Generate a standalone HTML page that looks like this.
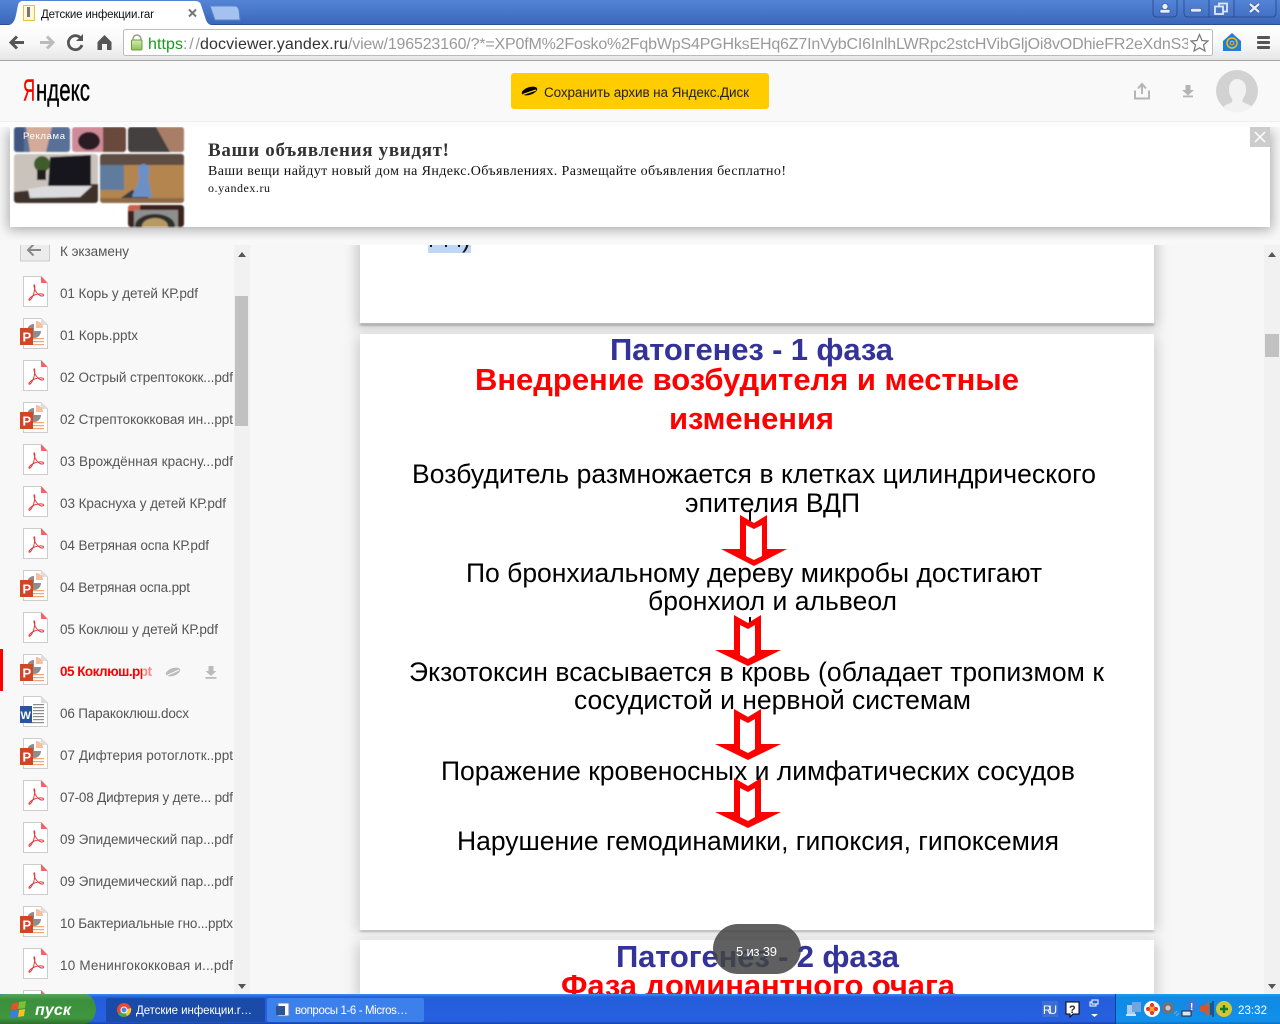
<!DOCTYPE html>
<html lang="ru"><head><meta charset="utf-8"><title>Детские инфекции.rar</title>
<style>
html,body{margin:0;padding:0;width:1280px;height:1024px;overflow:hidden;background:#f8f8f8}
svg{display:block;position:absolute;left:0;top:0}
text{font-family:"Liberation Sans",sans-serif;white-space:pre}
.serif{font-family:"Liberation Serif",serif}
.s{font-size:13.5px;fill:#555}
.b{font-size:26.5px;fill:#000}
.t{font-size:31px;font-weight:700;fill:#333399}
.r{font-size:31px;font-weight:700;fill:#f00}
</style></head><body>
<svg width="1280" height="1024" viewBox="0 0 1280 1024" xmlns="http://www.w3.org/2000/svg">
<defs>
<linearGradient id="tabbar" x1="0" y1="0" x2="0" y2="1"><stop offset="0" stop-color="#5484d6"/><stop offset="1" stop-color="#3a66b8"/></linearGradient>
<linearGradient id="tool" x1="0" y1="0" x2="0" y2="1"><stop offset="0" stop-color="#fff"/><stop offset=".5" stop-color="#f8f8f8"/><stop offset="1" stop-color="#e6e6e6"/></linearGradient>
<linearGradient id="task" x1="0" y1="0" x2="0" y2="1"><stop offset="0" stop-color="#3f8cf3"/><stop offset=".1" stop-color="#245edb"/><stop offset=".9" stop-color="#2660e0"/><stop offset="1" stop-color="#1941a5"/></linearGradient>
<linearGradient id="tray" x1="0" y1="0" x2="0" y2="1"><stop offset="0" stop-color="#1ba0f0"/><stop offset=".1" stop-color="#0f8ae6"/><stop offset=".9" stop-color="#1290e8"/><stop offset="1" stop-color="#0b6ec8"/></linearGradient>
<linearGradient id="start" x1="0" y1="0" x2="0" y2="1"><stop offset="0" stop-color="#5aa55a"/><stop offset=".2" stop-color="#3c8f3c"/><stop offset=".8" stop-color="#409640"/><stop offset="1" stop-color="#2d6e2d"/></linearGradient>
<linearGradient id="lock" x1="0" y1="0" x2="0" y2="1"><stop offset="0" stop-color="#d8ecb0"/><stop offset="1" stop-color="#86c25a"/></linearGradient>
<filter id="blur"><feGaussianBlur stdDeviation="1.2"/></filter>
<filter id="blurS"><feGaussianBlur stdDeviation="6"/></filter>
<filter id="soft"><feGaussianBlur stdDeviation=".8"/></filter>
<clipPath id="docclip"><rect x="250" y="245" width="1014" height="749"/></clipPath>
<clipPath id="sideclip"><rect x="0" y="245" width="250" height="749"/></clipPath>
<clipPath id="urlclip"><rect x="124" y="30" width="1064" height="26"/></clipPath>
<clipPath id="t1"><rect x="14" y="127" width="56" height="25" rx="3"/></clipPath>
<clipPath id="t2"><rect x="72" y="127" width="54" height="25" rx="3"/></clipPath>
<clipPath id="t3"><rect x="128" y="127" width="56" height="25" rx="3"/></clipPath>
<clipPath id="t4"><rect x="14" y="154" width="84" height="49" rx="3"/></clipPath>
<clipPath id="t5"><rect x="100" y="154" width="84" height="49" rx="3"/></clipPath>
<clipPath id="t6"><rect x="128" y="205" width="56" height="22" rx="3"/></clipPath>
<g id="pdf">
<path d="M23.5 0.5H41L47.5 7V30.5H23.5Z" fill="#fff" stroke="#ccc"/>
<path d="M41 0L47.5 7H41Z" fill="#e66"/>
<path d="M34.5 9c-1.2 3 1.5 8 5.5 10.5 2 1 4 .5 3.5-.7-.6-1.3-5-1.2-9 .2-3 1-6 4-5.5 5 .6 1 3-1.5 4.5-5.5 1-2.8 1.8-8.5 1-9.5-.5-.5-.5 0-.5.5Z" fill="none" stroke="#e0393e" stroke-width="1"/>
</g>
<g id="ppt">
<path d="M23.5 0.5H41L47.5 7V30.5H23.5Z" fill="#fff" stroke="#ccc"/>
<path d="M41 0L47.5 7H41Z" fill="#ddd"/>
<path d="M36 3a7 7 0 0 1 7 7h-7Z" fill="#f6bf9e"/>
<path d="M34 6v7h7a7 7 0 1 1-7-7Z" fill="#8d8d8d"/>
<rect x="33" y="20" width="11" height="1.2" fill="#f0a67c"/><rect x="33" y="23" width="11" height="1.2" fill="#f0a67c"/><rect x="33" y="26" width="11" height="1.2" fill="#f0a67c"/>
<rect x="20" y="10" width="13" height="17" fill="#d24625"/>
<text x="22.5" y="23.5" style="font-size:13px;font-weight:700;fill:#fff">P</text>
</g>
<g id="doc">
<path d="M23.5 0.5H41L47.5 7V30.5H23.5Z" fill="#fff" stroke="#ccc"/>
<path d="M41 0L47.5 7H41Z" fill="#ddd"/>
<g fill="#8a8a8a"><rect x="33" y="8" width="11" height="1.2"/><rect x="33" y="11" width="11" height="1.2"/><rect x="33" y="14" width="11" height="1.2"/><rect x="33" y="17" width="11" height="1.2"/><rect x="33" y="20" width="11" height="1.2"/><rect x="33" y="23" width="11" height="1.2"/><rect x="26" y="26" width="18" height="1.2"/></g>
<rect x="20" y="10" width="12" height="17" fill="#2a5699"/>
<text x="20.5" y="23" style="font-size:11px;font-weight:700;fill:#fff">W</text>
</g>
</defs>

<rect width="1280" height="1024" fill="#f8f8f8"/>

<g clip-path="url(#docclip)">
<rect x="250" y="245" width="1014" height="749" fill="#f7f7f7"/>
<rect x="356" y="238" width="802" height="90" fill="#999" opacity=".5" filter="url(#blurS)"/>
<rect x="360" y="323" width="794" height="3" fill="#aaa" filter="url(#blur)"/>
<rect x="360" y="245" width="794" height="78" fill="#fff"/>
<rect x="428" y="245" width="43" height="8" fill="#bdd7f5"/>
<rect x="430" y="245" width="2" height="2" fill="#111"/><rect x="445" y="245" width="2" height="2" fill="#111"/><rect x="458" y="245" width="2" height="2" fill="#111"/>
<text x="462" y="247" style="font-size:26px;fill:#111">)</text>
<rect x="356" y="336" width="802" height="596" fill="#999" opacity=".4" filter="url(#blurS)"/>
<rect x="360" y="930" width="794" height="2" fill="#aaa" filter="url(#blur)"/>
<rect x="360" y="334" width="794" height="596" fill="#fff"/>
<rect x="356" y="942" width="802" height="60" fill="#999" opacity=".4" filter="url(#blurS)"/>
<rect x="360" y="940" width="794" height="60" fill="#fff"/>

<text class="t" x="610" y="360" textLength="283">Патогенез - 1 фаза</text>
<text class="r" x="475" y="390" textLength="544">Внедрение возбудителя и местные</text>
<text class="r" x="669" y="429" textLength="165">изменения</text>
<text class="b" x="412" y="483" textLength="684">Возбудитель размножается в клетках цилиндрического</text>
<text class="b" x="685" y="512" textLength="175">эпителия ВДП</text>
<text class="b" x="466" y="582" textLength="576">По бронхиальному дереву микробы достигают</text>
<text class="b" x="648" y="610" textLength="249">бронхиол и альвеол</text>
<text class="b" x="409" y="681" textLength="695">Экзотоксин всасывается в кровь (обладает тропизмом к</text>
<text class="b" x="574" y="709" textLength="397">сосудистой и нервной системам</text>
<text class="b" x="441" y="780" textLength="634">Поражение кровеносных и лимфатических сосудов</text>
<text class="b" x="457" y="850" textLength="602">Нарушение гемодинамики, гипоксия, гипоксемия</text>
<rect x="749" y="511" width="2" height="10" fill="#000"/>
<rect x="749" y="617" width="2" height="6" fill="#000"/>

<path fill="#f00" d="M740 515L754 523L767 515V549H787L754 566L721 549H740Z"/>
<path fill="#fff" d="M746 525L754 529L762 525V556L754 560L746 556Z"/>
<path fill="#f00" d="M734 615L748 623L761 615V650H781L748 666L715 650H734Z"/>
<path fill="#fff" d="M740 625L748 629L755 625V655L748 659L740 655Z"/>
<path fill="#f00" d="M734 709L748 717L761 709V744H781L748 760L715 744H734Z"/>
<path fill="#fff" d="M740 719L748 723L755 719V749L748 753L740 749Z"/>
<path fill="#f00" d="M734 778L748 786L761 778V812H781L748 828L715 812H734Z"/>
<path fill="#fff" d="M740 788L748 792L755 788V817L748 821L740 817Z"/>

<text class="t" x="616" y="967" textLength="283">Патогенез - 2 фаза</text>
<text class="r" x="561" y="996" textLength="394">Фаза доминантного очага</text>
<rect x="713" y="924" width="88" height="50" rx="25" fill="#444" fill-opacity=".85"/>
<text x="736" y="956" style="font-size:13px;fill:#fff" textLength="41">5 из 39</text>
</g>

<rect x="1264" y="245" width="16" height="749" fill="#f1f1f1"/>
<rect x="1265" y="334" width="14" height="23" fill="#c1c1c1"/>
<path d="M1268 257L1272 252L1276 257Z" fill="#555"/>
<path d="M1268 984L1272 989L1276 984Z" fill="#555"/>

<g clip-path="url(#sideclip)">
<rect x="20.5" y="238" width="29" height="23" fill="#ececec" stroke="#ccc"/>
<path d="M28 250H41M33.500 244.500L28 250L33.500 255.500" fill="none" stroke="#888" stroke-width="2"/>
<text class="s" x="60" y="256" textLength="69">К экзамену</text>
<use href="#pdf" y="276"/><text class="s" x="60" y="298" textLength="138">01 Корь у детей КР.pdf</text>
<use href="#ppt" y="318"/><text class="s" x="60" y="340" textLength="78">01 Корь.pptx</text>
<use href="#pdf" y="360"/><text class="s" x="60" y="382" textLength="173">02 Острый стрептококк...pdf</text>
<use href="#ppt" y="402"/><text class="s" x="60" y="424" textLength="173">02 Стрептококковая ин...ppt</text>
<use href="#pdf" y="444"/><text class="s" x="60" y="466" textLength="173">03 Врождённая красну...pdf</text>
<use href="#pdf" y="486"/><text class="s" x="60" y="508" textLength="166">03 Краснуха у детей КР.pdf</text>
<use href="#pdf" y="528"/><text class="s" x="60" y="550" textLength="149">04 Ветряная оспа КР.pdf</text>
<use href="#ppt" y="570"/><text class="s" x="60" y="592" textLength="130">04 Ветряная оспа.ppt</text>
<use href="#pdf" y="612"/><text class="s" x="60" y="634" textLength="158">05 Коклюш у детей КР.pdf</text>
<rect x="0" y="649" width="3" height="42" fill="#f00"/>
<use href="#ppt" y="654"/><text x="60" y="676" style="font-size:13.5px;font-weight:700;fill:#f00" textLength="92">05 Коклюш.ppt</text>
<rect x="142" y="660" width="12" height="20" fill="#f8f8f8" opacity=".55"/>
<ellipse cx="173" cy="672" rx="7.5" ry="3.8" fill="#bbb" transform="rotate(-20 173 672)"/>
<path d="M167 675.5L179 670" stroke="#f8f8f8" stroke-width="1.2"/>
<path d="M208.5 666h5v5h3l-5.5 5-5.5-5h3Z" fill="#bbb"/><rect x="205.5" y="677" width="11" height="1.8" fill="#bbb"/>
<use href="#doc" y="696"/><text class="s" x="60" y="718" textLength="129">06 Паракоклюш.docx</text>
<use href="#ppt" y="738"/><text class="s" x="60" y="760" textLength="173">07 Дифтерия ротоглотк..ppt</text>
<use href="#pdf" y="780"/><text class="s" x="60" y="802" textLength="173">07-08 Дифтерия у дете... pdf</text>
<use href="#pdf" y="822"/><text class="s" x="60" y="844" textLength="173">09 Эпидемический пар...pdf</text>
<use href="#pdf" y="864"/><text class="s" x="60" y="886" textLength="173">09 Эпидемический пар...pdf</text>
<use href="#ppt" y="906"/><text class="s" x="60" y="928" textLength="173">10 Бактериальные гно...pptx</text>
<use href="#pdf" y="948"/><text class="s" x="60" y="970" textLength="173">10 Менингококковая и...pdf</text>
<use href="#pdf" y="990"/>
<rect x="234" y="245" width="16" height="749" fill="#f1f1f1"/>
<rect x="235" y="296" width="13" height="130" fill="#c1c1c1"/>
<path d="M238 257L242 252L246 257Z" fill="#555"/>
<path d="M238 984L242 989L246 984Z" fill="#555"/>
</g>

<rect x="0" y="227" width="1280" height="18" fill="#f8f8f8"/>
<rect x="8" y="131" width="1264" height="99" fill="#777" opacity=".6" filter="url(#blurS)"/>

<rect x="10" y="127" width="1260" height="100" fill="#fff"/>
<g filter="url(#soft)">
<g clip-path="url(#t1)"><rect x="14" y="127" width="56" height="25" fill="#5a6f97"/><path d="M26 127H52L46 152H30Z" fill="#d4ab98"/><rect x="14" y="127" width="10" height="25" fill="#3f5680"/></g>
<g clip-path="url(#t2)"><rect x="72" y="127" width="54" height="25" fill="#d08b98"/><ellipse cx="89" cy="141" rx="11" ry="9" fill="#2b1e22"/><rect x="103" y="127" width="23" height="25" fill="#6a4a3e"/></g>
<g clip-path="url(#t3)"><rect x="128" y="127" width="56" height="25" fill="#44413f"/><path d="M156 127H184V152H170Z" fill="#a87f66"/></g>
<g clip-path="url(#t4)"><rect x="14" y="154" width="84" height="49" fill="#c9c3bc"/><path d="M14 192L90 184H98V203H14Z" fill="#3c302b"/><path d="M50 157L91 155V185L48 188Z" fill="#15141a"/><path d="M28 189L48 186H92L80 197L30 198Z" fill="#dcdcde"/><circle cx="42" cy="164" r="8" fill="#3f5c2c"/><rect x="37" y="170" width="9" height="10" fill="#221f1b"/></g>
<g clip-path="url(#t5)"><rect x="100" y="154" width="84" height="49" fill="#b4854f"/><rect x="100" y="154" width="84" height="11" fill="#5d4e42"/><rect x="100" y="165" width="24" height="25" fill="#5e7c9c"/><path d="M118 200L132 190L150 195L144 203H118Z" fill="#3a3a42"/><path d="M132 197c2-8 7-12 7-22-3-5 0-12 6-11 5 2 6 8 3 12 1 8 3 14 4 21Z" fill="#6c90c6"/><rect x="100" y="198" width="84" height="5" fill="#8d6a45"/></g>
<g clip-path="url(#t6)"><rect x="128" y="205" width="56" height="22" fill="#3a241c"/><rect x="128" y="205" width="12" height="6" fill="#c9604c"/><rect x="134" y="210" width="44" height="17" fill="#8f8f8d"/><ellipse cx="155" cy="226" rx="20" ry="12" fill="#2f2d2c"/><ellipse cx="155" cy="226" rx="13" ry="8" fill="#b79966"/></g>
</g>
<text x="23" y="139" style="font-size:9.5px;fill:#fff" textLength="42">Реклама</text>
<text class="serif" x="208" y="156" style="font-size:19px;font-weight:700;fill:#333" textLength="241">Ваши объявления увидят!</text>
<text class="serif" x="208" y="175" style="font-size:14px;fill:#111" textLength="578">Ваши вещи найдут новый дом на Яндекс.Объявлениях. Размещайте объявления бесплатно!</text>
<text class="serif" x="208" y="192" style="font-size:12px;fill:#111" textLength="62">o.yandex.ru</text>
<rect x="1250" y="127" width="20" height="20" fill="#ccc"/>
<path d="M1255 132L1265 142M1265 132L1255 142" stroke="#fff" stroke-width="1.5"/>

<rect x="0" y="61" width="1280" height="60" fill="#f9f9f9"/>
<rect x="0" y="121" width="1280" height="1" fill="#f0f0f0"/>
<rect x="0" y="122" width="1280" height="5" fill="#fcfcfc"/>
<text x="23" y="100.5" style="font-size:31px;fill:#f00;stroke:#f00;stroke-width:.4" textLength="12" lengthAdjust="spacingAndGlyphs">Я</text>
<text x="36" y="100.5" style="font-size:31px;fill:#000;stroke:#000;stroke-width:.4" textLength="54" lengthAdjust="spacingAndGlyphs">ндекс</text>
<rect x="511" y="73" width="258" height="36" rx="3" fill="#ffcc00"/>
<ellipse cx="529.5" cy="91" rx="8" ry="3.8" fill="#000" transform="rotate(-18 529.5 91)"/>
<path d="M523 94.5L536 90" stroke="#ffcc00" stroke-width="1.2"/>
<text x="544" y="97" style="font-size:13.5px;fill:#222" textLength="205">Сохранить архив на Яндекс.Диск</text>
<path d="M1135 90.5V98.5H1149V90.5" fill="none" stroke="#b5b5b5" stroke-width="2"/>
<path d="M1142 94V85M1138 88.5L1142 84L1146 88.5" fill="none" stroke="#b5b5b5" stroke-width="2"/>
<path d="M1185.5 85h5v5h3.5l-6 5.5-6-5.5h3.5Z" fill="#b5b5b5"/><rect x="1183" y="95.5" width="10" height="1.8" fill="#b5b5b5"/>
<circle cx="1237" cy="91" r="21" fill="#d2d2d2"/>
<path d="M1223 108c2-4 7-4 9-6 1-1.5 0-3-1-5-2-3-2-6-2-9 0-5 4-9 8-9 5 0 9 4 9 9 0 3 0 6-2 9-1 2-2 3.5-1 5 2 2 7 2 9 5-8 7-21 7-29 1Z" fill="#f2f2f2"/>

<rect x="0" y="0" width="1280" height="25" fill="url(#tabbar)"/>
<rect x="0" y="24" width="1280" height="1" fill="#2d4f96"/>
<path d="M210 6H235Q238 6 239 10L240 20H215Z" fill="#a3c3ee" stroke="#5a86cc"/>
<path d="M8 25Q14 25 16 15L18 5Q19 1 23 1H195Q200 1 201 5L205 17Q207 25 212 25Z" fill="#fff"/>
<rect x="23.5" y="5.5" width="11" height="15" fill="#fff8d8" stroke="#e6c33c"/>
<rect x="27" y="7" width="3" height="10" fill="#777"/>
<text x="41" y="18" style="font-size:11.5px;fill:#111" textLength="113">Детские инфекции.rar</text>
<path d="M189 9.5L196 16.5M196 9.5L189 16.5" stroke="#777" stroke-width="2"/>

<g fill="none" stroke="#2d4f96">
<path d="M1153 0V13Q1153 17 1157 17H1173Q1177 17 1177 13V0"/>
<path d="M1184 0V13Q1184 17 1188 17H1272Q1276 17 1276 13V0"/>
<path d="M1209 0V17M1234 0V17"/>
</g>
<circle cx="1165" cy="6.5" r="3" fill="#e8eefa" stroke="#2d4f96" stroke-width=".6"/><rect x="1160" y="9.5" width="10" height="3.5" rx="1" fill="#e8eefa" stroke="#2d4f96" stroke-width=".6"/>
<rect x="1190.5" y="8.5" width="11" height="3.5" rx="1.5" fill="#dfe8f8" stroke="#2d4f96" stroke-width=".6"/>
<rect x="1219" y="3.5" width="8" height="8" fill="none" stroke="#dfe8f8" stroke-width="1.8"/>
<rect x="1215" y="6.5" width="8" height="7.5" fill="#4a77c7" stroke="#dfe8f8" stroke-width="1.8"/>
<path d="M1250 4L1259 12M1259 4L1250 12" stroke="#2d4f96" stroke-width="3.6"/>
<path d="M1250 4L1259 12M1259 4L1250 12" stroke="#e8eefa" stroke-width="2.4"/>

<rect x="0" y="25" width="1280" height="35" fill="url(#tool)"/>
<rect x="0" y="60" width="1280" height="1" fill="#a5a5a5"/>
<path d="M11 42.5H24M17 36.5L11 42.5L17 48.5" fill="none" stroke="#555" stroke-width="3"/>
<path d="M40 42.5H53M47 36.5L53 42.5L47 48.5" fill="none" stroke="#bbb" stroke-width="3"/>
<path d="M81 38.5A7 7 0 1 0 82 45" fill="none" stroke="#555" stroke-width="2.8"/><path d="M76 41H83V34Z" fill="#555"/>
<path d="M104.5 35L111.5 42V50H107V44H102V50H97.5V42Z" fill="#555"/>
<rect x="123.5" y="29.5" width="1089" height="26" rx="2" fill="#fff" stroke="#bbb"/>
<path d="M133 40v-1a4 4 0 0 1 8 0v1" fill="none" stroke="#999" stroke-width="1.5"/>
<rect x="131.5" y="40" width="10.5" height="10" rx="1" fill="url(#lock)" stroke="#6a9e3c"/>
<g clip-path="url(#urlclip)">
<text x="148" y="49" style="font-size:16px;fill:#1a9a1a" textLength="35">https</text>
<text x="183" y="49" style="font-size:16px;fill:#999" textLength="17">://</text>
<text x="200" y="49" style="font-size:16px;fill:#333" textLength="148">docviewer.yandex.ru</text>
<text x="348" y="49" style="font-size:16px;fill:#999" textLength="842">/view/196523160/?*=XP0fM%2Fosko%2FqbWpS4PGHksEHq6Z7InVybCI6InlhLWRpc2stcHVibGljOi8vODhieFR2eXdnS3</text>
</g>
<path d="M1199.5 34.5L1202 40.5L1208 41L1203.5 45L1205 51L1199.5 47.8L1194 51L1195.5 45L1191 41L1197 40.5Z" fill="#fff" stroke="#777" stroke-width="1.2"/>
<path d="M1232 33L1241 41V51H1223V41Z" fill="#1a7fe0"/>
<circle cx="1232" cy="43" r="5" fill="none" stroke="#ffb400" stroke-width="1.5"/><circle cx="1232" cy="43" r="1.8" fill="none" stroke="#ffb400"/>
<rect x="1257" y="36" width="13" height="3" rx="1" fill="#555"/><rect x="1257" y="41" width="13" height="3" rx="1" fill="#555"/><rect x="1257" y="46" width="13" height="3" rx="1" fill="#555"/>

<rect x="0" y="994" width="1280" height="30" fill="url(#task)"/>
<path d="M0 996Q0 994 6 994H85Q95 996 96 1009Q95 1022 85 1024H0Z" fill="url(#start)"/>
<path d="M12 1004l6-2v7l-7 1Z" fill="#e8502d"/><path d="M19 1002l7-1-1 7-7 1Z" fill="#7cc02e"/><path d="M11 1011l7-1v7l-8 1Z" fill="#3b7de0"/><path d="M19 1010l6-1-1 7-6 1Z" fill="#f7c21c"/>
<text x="35" y="1015" style="font-size:16px;font-weight:700;font-style:italic;fill:#fff" textLength="36">пуск</text>
<rect x="106" y="998" width="159" height="24" rx="2" fill="#1a4ba8"/>
<rect x="267" y="998" width="157" height="24" rx="2" fill="#3c80ec"/>
<circle cx="124" cy="1010" r="7" fill="#e8483a"/><path d="M124 1010L118 1014A7 7 0 0 0 127 1016Z" fill="#3eaa50"/><path d="M124 1010L127 1016A7 7 0 0 0 131 1008Z" fill="#f8c92c"/><circle cx="124" cy="1010" r="3" fill="#4a86e8" stroke="#fff"/>
<text x="136" y="1014" style="font-size:11.5px;fill:#fff" textLength="116">Детские инфекции.r…</text>
<rect x="278" y="1003" width="11" height="13" fill="#fff" stroke="#6a82a8"/>
<rect x="276" y="1006" width="9" height="9" fill="#2a5699"/>
<text x="295" y="1014" style="font-size:11.5px;fill:#fff" textLength="113">вопросы 1-6 - Micros…</text>
<rect x="1042" y="1001" width="16" height="16" fill="#3d6fd0"/>
<text x="1043" y="1014" style="font-size:11.5px;fill:#fff" textLength="14">RU</text>
<path d="M1066 1002H1079V1014H1073L1070 1017V1014H1066Z" fill="#fff" stroke="#000"/>
<text x="1069" y="1013" style="font-size:11px;font-weight:700;fill:#223">?</text>
<rect x="1090" y="1002" width="6" height="4" fill="none" stroke="#fff"/><rect x="1092" y="1000" width="6" height="4" fill="#245edb" stroke="#fff"/>
<path d="M1091 1014h7l-3.5 3Z" fill="#fff"/>
<rect x="1115" y="994" width="165" height="30" fill="url(#tray)"/>
<rect x="1115" y="994" width="1" height="30" fill="#0b3e94"/>
<rect x="1127" y="1005" width="8" height="9" fill="#a8cdf2"/><rect x="1132" y="1002" width="9" height="10" fill="#6fa6e0"/><rect x="1126" y="1014" width="10" height="2" fill="#cfe2f6"/>
<circle cx="1152" cy="1009" r="8" fill="#fff"/><circle cx="1152" cy="1009" r="4" fill="#f5a623"/><circle cx="1152" cy="1005" r="2" fill="#e33"/><circle cx="1156" cy="1009" r="2" fill="#e33"/><circle cx="1148" cy="1009" r="2" fill="#e33"/><circle cx="1152" cy="1013" r="2" fill="#e33"/>
<circle cx="1168" cy="1008" r="6" fill="#6f7176"/><circle cx="1168" cy="1008" r="2.5" fill="#c9cbd0"/><path d="M1174 1014l3-3M1176 1016l3-3" stroke="#7ea9d8"/>
<circle cx="1192" cy="1006" r="6" fill="#3d78d8"/><text x="1190" y="1010" style="font-size:10px;font-weight:700;fill:#fff">!</text><rect x="1182" y="1011" width="9" height="5" fill="#dfe5ef" stroke="#223"/>
<path d="M1200 1006H1204L1209 1001V1017L1204 1012H1200Z" fill="#d8552a"/><path d="M1211 1003V1015M1213 1001V1017" stroke="#222"/>
<circle cx="1224" cy="1009" r="8" fill="#d6c732"/><path d="M1224 1005V1013M1220 1009H1228" stroke="#0f7f2f" stroke-width="2.5"/>
<text x="1238" y="1014" style="font-size:11.5px;fill:#fff" textLength="29">23:32</text>
</svg>
</body></html>
